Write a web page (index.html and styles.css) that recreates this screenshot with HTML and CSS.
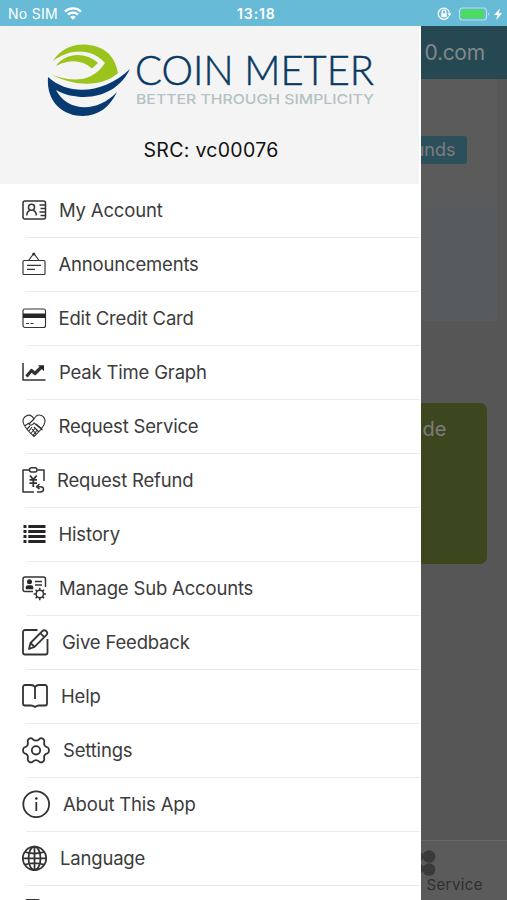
FILE: index.html
```html
<!DOCTYPE html>
<html lang="en">
<head>
<meta charset="utf-8">
<meta name="viewport" content="width=device-width, initial-scale=1">
<title>Coin Meter</title>
<link rel="stylesheet" href="styles.css">
</head>
<body>
<header class="status">
  <span class="carrier">No SIM</span>
  <svg class="wifi" width="18" height="13" viewBox="0 0 18 13" fill="none" stroke="#fff" stroke-width="2.3"><path d="M1 4.6C5.500.4 12.500.4 17 4.6M3.900 7.700C6.800 5 11.200 5 14.100 7.700"/><path d="M6.200 9.900Q9 7.600 11.800 9.900L9 12.800Z" fill="#fff" stroke="none"/></svg>
  <span class="clock">13:18</span>
  <svg class="power" width="66" height="16" viewBox="0 0 66 16"><g fill="none" stroke="#fff" stroke-width="1.300"><path d="M11.700 10.500A5.600 5.600 0 1 1 12.300 6.500"/><path d="M5.200 7.500V6a1.800 1.800 0 0 1 3.600 0v1.500"/></g><path d="M4.300 7.200h5.400v4H4.300zM10.500 7.300h4l-2 3z" fill="#fff"/><rect x="22.500" y="2" width="27" height="12" rx="3" fill="none" stroke="#b5dfeb" stroke-width="1.200"/><rect x="24" y="3.500" width="23" height="9" rx="1.500" fill="#4cdb62"/><path d="M51 6q2 2 0 4z" fill="#b5dfeb"/><path d="M63 2.500l-6 6.500h3.500l-1.300 5 6-6.700h-3.500z" fill="#fff"/></svg>
</header>
<div class="screen">
  <nav class="drawer">
    <div class="brand">
      <svg class="logo" width="340" height="80" viewBox="40 40 340 80">
        <path fill="#9ac31c" d="M53 61C62 47 75 44.500 84 44.500C103 45 115 55 118 73C103 87 76 87 52 75C72 82 92 83 105 63C92 48 70 48 53 61ZM56 66C66 52 86 52 98 63L92 68.500C82 60 70 59 56 66Z"/>
        <path fill="#083a72" d="M48 77C70 97 105 93 130 69C122 86 105 97 84 97C75 97 65 95 56 90C66 110 95 115 117 92C110 107 98 116 83 116C64 116 46 103 48 77Z"/>
        <text class="name" x="135" y="85" textLength="239" lengthAdjust="spacingAndGlyphs">COIN METER</text>
        <text class="motto" x="136" y="104" textLength="238" lengthAdjust="spacingAndGlyphs">BETTER THROUGH SIMPLICITY</text>
      </svg>
      <p class="source">SRC: vc00076</p>
    </div>
    <ul class="menu">
      <li><svg class="icon" viewBox="0 0 28 28"><rect x="1" y="5" width="22.500" height="18" rx="2"/><circle cx="9.500" cy="11.200" r="3"/><path d="M4.800 19.500c0-3 1.500-4.500 3-5M14.300 19.500c0-3-1.500-4.500-3-5M17.500 9h6M18.500 12.500h5M17.500 16h6M18.500 19.500h5"/></svg><span class="g37">My Account</span></li>
      <li><svg class="icon thin" viewBox="0 0 28 28"><rect x="1" y="10.500" width="22" height="14" rx="1"/><path d="M6.500 10.500l5.300-7 5.300 7M5 15.300h14M5 19.300h8"/><circle cx="11.800" cy="4" r="1" fill="#333"/></svg><span class="g36">Announcements</span></li>
      <li><svg class="icon thin" viewBox="0 0 28 28"><rect x="1" y="5" width="22.500" height="18.500" rx="2"/><path class="solid" d="M1 9.500h22.500v4.500H1z"/><path d="M4 19.500h3M8.500 19.500h3"/></svg><span class="g36">Edit Credit Card</span></li>
      <li><svg class="icon" viewBox="0 0 28 28"><path d="M1 5v17h22.500"/><path class="bold" d="M4.500 18.500l5-6 3.500 3 6.500-6.500"/><path class="solid" d="M16 7.300h6v6z"/></svg><span class="g37">Peak Time Graph</span></li>
      <li><svg class="icon thin" viewBox="0 0 28 28"><path d="M12 7C8-1 0 5 1.200 10.500 2 15 6 19 12 24.500c6-5.500 10-9.500 10.800-14C24 4 16-.5 12 7zM12 7l-5 5c1.500 2 3.500 1 5-1l8.500 7M2.500 14l4.500-3M7 19l3-4M9.300 21l4-5M11.300 23l4-5M5 17l3-3M14 12l6 5M12 15l5 5M10 17l4 5"/></svg><span class="g36">Request Service</span></li>
      <li><svg class="icon" viewBox="0 0 28 28"><path d="M7 4H1v22h11M15.500 4H22v11"/><rect x="7.500" y="1.700" width="7.500" height="4.300" rx="2"/><path class="mid" d="M8 9.500l3.300 4L14.700 9.500M11.300 13.500V21M7.500 13.800h7.500M7.500 17.200h7.500"/><path d="M17.500 18l-3 2.700 3 2.500M15 20.700h3.500c4 0 4 5.300 0 5.300H15"/></svg><span class="g35">Request Refund</span></li>
      <li><svg class="icon" viewBox="0 0 28 28"><path class="solid" d="M1.500 5h3v3h-3zM6.300 5h17.200v3H6.300zM1.500 10h3v3h-3zM6.300 10h17.200v3H6.300zM1.500 15h3v3h-3zM6.300 15h17.200v3H6.300zM1.500 20h3v3h-3zM6.300 20h17.200v3H6.300z"/></svg><span class="g36">History</span></li>
      <li><svg class="icon" viewBox="0 0 28 28"><path d="M11 17.500H3a2 2 0 0 1-2-2V5a2 2 0 0 1 2-2h18.500a2 2 0 0 1 2 2v8M13 7.500h7M13 11h7"/><circle class="solid" cx="7.500" cy="7.800" r="2.500"/><path class="solid" d="M3.800 15.300v-2q0-2 2-2h3.400q2 0 2 2v2z"/><circle cx="17.800" cy="20" r="3.700"/><path d="M17.800 13.800v2.500M17.800 23.700v2.500M11.600 20h2.500M21.500 20H24M13.500 15.700l1.700 1.700M20.400 22.600l1.700 1.700M13.500 24.300l1.700-1.700M20.400 17.400l1.700-1.700"/></svg><span class="g37">Manage Sub Accounts</span></li>
      <li><svg class="icon mid" viewBox="0 0 28 28"><path d="M15.500 2H3a2 2 0 0 0-2 2v20.500a2 2 0 0 0 2 2h20.500a2 2 0 0 0 2-2V11"/><path d="M7 21l1.500-6L20.300 3.200a2.800 2.800 0 0 1 4 4L12.500 18.800zM18.300 5.200l4 4M8.500 15l4 3.800"/></svg><span class="g40">Give Feedback</span></li>
      <li><svg class="icon mid" viewBox="0 0 28 28"><path d="M13 5Q11.500 3 9 3H3a2 2 0 0 0-2 2v16.500a2 2 0 0 0 2 2h6q2 0 4 1.500 2-1.500 4-1.500h6a2 2 0 0 0 2-2V5a2 2 0 0 0-2-2h-6q-2.500 0-4 2zM13 5v12"/></svg><span class="g39">Help</span></li>
      <li><svg class="icon mid" viewBox="0 0 28 28"><path d="M18.200 2.300Q19.500 1.800 20.900 2.800T22.300 5Q21.200 10.500 25.500 11.300Q27 12 27 14.300T25.500 17.300Q21.200 18.100 22.300 23.600Q22.300 24.800 20.900 25.800T18.200 26.300Q14 21.800 9.800 26.300Q8.500 26.800 7.100 25.800T5.700 23.600Q6.800 18.100 2.500 17.300Q1 16.600 1 14.300T2.500 11.300Q6.800 10.500 5.700 5Q5.700 3.800 7.100 2.800T9.800 2.300Q14 6.800 18.200 2.300Z"/><circle cx="14" cy="14.300" r="4.200"/></svg><span class="g41">Settings</span></li>
      <li><svg class="icon mid" viewBox="0 0 28 28"><circle cx="14.200" cy="14.300" r="12.900"/><path d="M14.300 12v9"/><circle class="solid" cx="14.300" cy="8.500" r="1.300"/></svg><span class="g41">About This App</span></li>
      <li><svg class="icon mid" viewBox="0 0 28 28"><circle cx="12.500" cy="14.300" r="11.700"/><ellipse cx="12.500" cy="14.300" rx="6" ry="11.700"/><path d="M12.500 2.500V26M1 14.300h23M3 8q9.500 3 19 0M3 20.600q9.500-3 19 0"/></svg><span class="g38">Language</span></li>
      <li><svg class="icon mid" viewBox="0 0 28 28"><rect x="4" y="2" width="13" height="24" rx="1"/></svg></li>
    </ul>
  </nav>
  <main class="page">
    <div class="appbar">0.com</div>
    <section class="account"><span class="button">unds</span></section>
    <section class="tile">de</section>
    <footer class="tab">
      <svg width="17" height="28" viewBox="0 0 17 28"><path fill="#3a3a3a" d="M0 3l3 3v3l-3 3zM0 15l3 3v3l-3 3z"/><circle cx="8" cy="7.500" r="6.300" fill="#3a3a3a"/><circle cx="8" cy="20.500" r="6.300" fill="#3a3a3a"/></svg>
      <span>t Service</span>
    </footer>
  </main>
</div>
</body>
</html>
```
FILE: styles.css
```css
* { box-sizing: border-box; }
body {
  margin: 0;
  width: 507px;
  height: 900px;
  overflow: hidden;
  display: flex;
  flex-direction: column;
  font-family: Inter, "Liberation Sans", sans-serif;
  background: #fff;
}
.status {
  height: 26px;
  flex: none;
  display: grid;
  grid-template-columns: 56px 181px 1fr auto;
  align-items: center;
  padding: 1px 4px 0 8px;
  background: #67bbd6;
  color: #fff;
  font-size: 14px;
  letter-spacing: 0.3px;
}
.clock { font-weight: 600; font-size: 14px; letter-spacing: 0.9px; margin-left: -8px; }
.screen { flex: 1; min-height: 0; display: flex; }
.drawer { width: 420.5px; flex: none; overflow: hidden; background: #fff; }
.brand {
  height: 158px;
  margin-right: 2px;
  padding: 14px 0 0 40px;
  background: #f4f4f4;
}
.logo { display: block; }
.name { font: 300 41px Lato, sans-serif; fill: #083a63; stroke: #083a63; stroke-width: 0.5px; }
.motto { font: 500 13.5px Inter, sans-serif; fill: #b3c2c5; }
.source {
  margin: 18px 0 0 103.5px;
  font-size: 19.5px;
  line-height: 24px;
  letter-spacing: 0.3px;
  color: #111;
  white-space: nowrap;
}
.menu { list-style: none; margin: 0; padding: 0; }
.menu li {
  height: 54px;
  display: flex;
  align-items: center;
  margin-left: 22px;
  color: #3c3c3c;
  font-size: 18.5px;
  letter-spacing: -0.18px;
  white-space: nowrap;
  background: linear-gradient(#ebebeb, #ebebeb) 4px 100% / 394px 1px no-repeat;
}
.menu span { padding-bottom: 2px; }
.icon {
  width: 28px;
  height: 28px;
  flex: none;
  margin-top: -2px;
  fill: none;
  stroke: #333;
  stroke-width: 1.5;
  stroke-linejoin: round;
}
.icon.thin { stroke-width: 1.15; }
.icon.mid, .mid { stroke-width: 1.8; }
.bold { stroke-width: 3.2; }
.icon .solid { fill: #262626; stroke: none; }
.g35 { margin-left: 7px; }
.g36 { margin-left: 8.5px; }
.g37 { margin-left: 9px; }
.g38 { margin-left: 10px; }
.g39 { margin-left: 11px; }
.g40 { margin-left: 12px; }
.g41 { margin-left: 13px; }
.page {
  flex: 1;
  min-width: 0;
  display: flex;
  flex-direction: column;
  overflow: hidden;
  background: #565656;
  color: #7d7d7d;
}
.appbar {
  height: 53px;
  padding-left: 4px;
  background: #264853;
  color: #80888b;
  font-size: 21px;
  letter-spacing: -0.3px;
  line-height: 53px;
}
.account {
  height: 242px;
  margin-right: 10px;
  padding-top: 57px;
  background: linear-gradient(#5b5b5b 45%, #575b5e 60%);
}
.button {
  display: flex;
  justify-content: flex-end;
  width: 46px;
  height: 28px;
  padding-right: 11px;
  border-radius: 0 3px 3px 0;
  background: #2c505b;
  font-size: 18px;
  line-height: 28px;
}
.tile {
  height: 161px;
  margin: 82px 20px 0 0;
  padding: 13px 0 0 2px;
  border-radius: 0 7px 7px 0;
  background: #3c461f;
  font-size: 20px;
  line-height: 26px;
}
.tab {
  flex: 1;
  margin-top: 276px;
  padding-top: 8px;
  border-top: 1px solid #676767;
  background: #5b5b5b;
  color: #2f2f2f;
  font-size: 15px;
}
.tab svg { display: block; }
.tab span { display: block; margin: -2px 0 0 -4px; line-height: 19px; letter-spacing: 0.4px; white-space: nowrap; }
```
